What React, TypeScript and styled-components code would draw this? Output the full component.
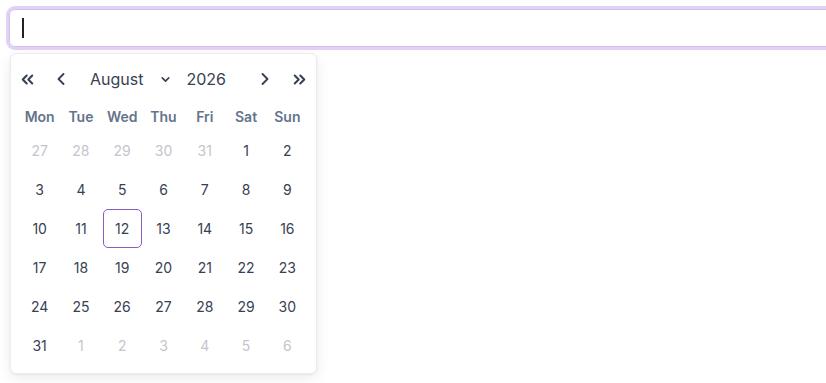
import * as React from "react";
import styled, { createGlobalStyle } from "styled-components";
import { ChevronLeft, ChevronRight, ChevronsLeft, ChevronsRight, ChevronDown } from "lucide-react";

const GlobalStyle = createGlobalStyle`
  html, body {
    margin: 0;
    background: #ffffff;
  }
  body {
    font-family: Inter, "Noto Sans", sans-serif;
  }
`;

const WEEKDAYS = ["Mon", "Tue", "Wed", "Thu", "Fri", "Sat", "Sun"];

// August 2026 starts on a Saturday
const buildDays = () => {
  const days: { label: number; muted: boolean }[] = [];
  for (let d = 27; d <= 31; d++) days.push({ label: d, muted: true });
  for (let d = 1; d <= 31; d++) days.push({ label: d, muted: false });
  for (let d = 1; d <= 6; d++) days.push({ label: d, muted: true });
  return days;
};

export default function App() {
  const days = buildDays();
  return (
    <Page>
      <GlobalStyle />
      <Field>
        <Caret />
      </Field>
      <Popover>
        <Header>
          <NavButton aria-label="previous year">
            <ChevronsLeft size={19} strokeWidth={2.6} />
          </NavButton>
          <NavButton aria-label="previous month">
            <ChevronLeft size={20} strokeWidth={2.3} />
          </NavButton>
          <Title>
            <MonthSelect>
              August
              <ChevronDown size={13} strokeWidth={3} />
            </MonthSelect>
            <Year>2026</Year>
          </Title>
          <NavButton aria-label="next month">
            <ChevronRight size={20} strokeWidth={2.3} />
          </NavButton>
          <NavButton aria-label="next year">
            <ChevronsRight size={19} strokeWidth={2.6} />
          </NavButton>
        </Header>
        <Grid>
          {WEEKDAYS.map((w) => (
            <Weekday key={w}>{w}</Weekday>
          ))}
          {days.map((d, i) => (
            <Day key={i} $muted={d.muted} $selected={!d.muted && d.label === 12}>
              {d.label}
            </Day>
          ))}
        </Grid>
      </Popover>
    </Page>
  );
}

// css
const Page = styled.div`
  width: 826px;
  height: 383px;
  overflow: hidden;
  padding: 9px 0 0 9px;
  box-sizing: border-box;
`;

const Field = styled.div`
  box-sizing: border-box;
  width: 860px;
  height: 38px;
  border: 1px solid #d4bff0;
  border-radius: 6px;
  box-shadow: 0 0 0 3px #e2d3f5;
  display: flex;
  align-items: center;
  padding-left: 12px;
`;

const Caret = styled.span`
  width: 1.5px;
  height: 20px;
  background: #1f2328;
`;

const Popover = styled.div`
  box-sizing: border-box;
  margin: 6px 0 0 1px;
  width: 307px;
  padding: 8px;
  background: #ffffff;
  border: 1px solid #ececf0;
  border-radius: 6px;
  box-shadow: 0 4px 14px rgba(0, 0, 0, 0.08), 0 1px 3px rgba(0, 0, 0, 0.05);
  color: #374151;
`;

const Header = styled.div`
  display: flex;
  align-items: center;
  height: 34px;
  margin: 0 -5px 0 -6px;
`;

const NavButton = styled.button`
  all: unset;
  width: 28px;
  height: 28px;
  display: flex;
  align-items: center;
  justify-content: center;
  color: #374151;
  & + & {
    margin-left: 6px;
  }
`;

const Title = styled.div`
  flex: 1;
  display: flex;
  align-items: center;
  padding-left: 15px;
  font-size: 16px;
  color: #374151;
`;

const MonthSelect = styled.div`
  display: flex;
  align-items: center;
  gap: 16px;
  svg {
    margin-top: 1px;
  }
`;

const Year = styled.span`
  margin-left: 14px;
`;

const Grid = styled.div`
  display: grid;
  grid-template-columns: repeat(7, 1fr);
  grid-auto-rows: 39px;
  grid-template-rows: 35px;
`;

const Weekday = styled.div`
  display: flex;
  align-items: center;
  justify-content: center;
  padding-top: 5px;
  font-size: 14px;
  font-weight: 600;
  color: #64748b;
`;

const Day = styled.div<{ $muted: boolean; $selected: boolean }>`
  display: flex;
  align-items: center;
  justify-content: center;
  margin: 0 1px;
  font-size: 14px;
  border-radius: 5px;
  color: ${(p) => (p.$muted ? "#c3c6cc" : "#374151")};
  border: 1px solid ${(p) => (p.$selected ? "#8a5cc4" : "transparent")};
`;
